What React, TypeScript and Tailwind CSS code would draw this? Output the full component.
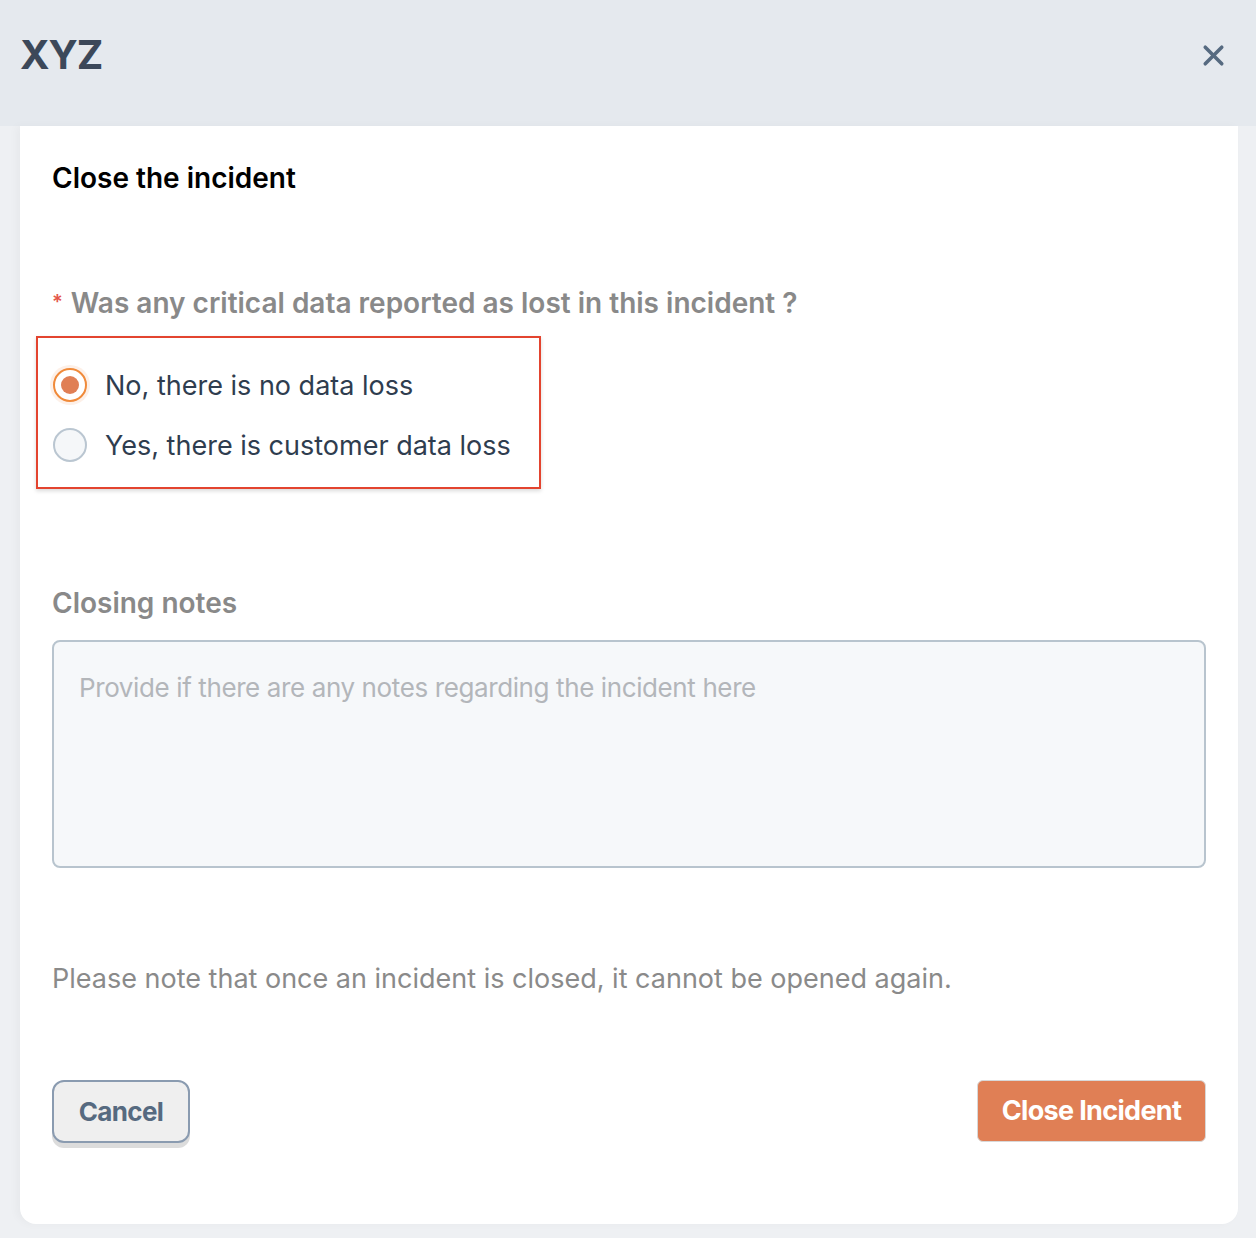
import { X } from "lucide-react";

export default function App() {
  return (
    <div
      className="min-h-[1238px] bg-[#eef0f3]"
      style={{ fontFamily: "Inter, 'Noto Sans', sans-serif" }}
    >
      <header className="flex h-[126px] items-center justify-between bg-[#e5e9ee] pb-[16px] pl-[20px] pr-[26px]">
        <h1 className="text-[40px] font-bold leading-none tracking-tight text-[#3c4859]">
          XYZ
        </h1>
        <X className="h-[33px] w-[33px] text-[#566a80]" strokeWidth={2.6} />
      </header>

      <div className="px-[20px] pb-[14px] pr-[18px]">
        <section className="rounded-b-[16px] bg-white px-[32px] pb-[81px] pt-[36px] shadow-[-4px_0_8px_rgba(0,0,0,0.03)]">
          <h2 className="text-[28px] font-semibold leading-[32px] text-black">
            Close the incident
          </h2>

          <p className="mt-[92px] text-[28px] font-semibold leading-[32px] text-[#898989]">
            <span className="mr-[8px] align-[4px] text-[20px] text-[#e4574a]">*</span>
            Was any critical data reported as lost in this incident ?
          </p>

          <div className="-ml-[16px] mt-[17px] w-[505px] border-2 border-[#e3442f] px-[12px] pb-[18px] pt-[23px] shadow-[0_2px_4px_rgba(0,0,0,0.15)]">
            <label className="flex h-[48px] items-center gap-[15px]">
              <span className="flex h-[40px] w-[40px] items-center justify-center rounded-full bg-[#fdf0e8]">
                <span className="flex h-[34px] w-[34px] items-center justify-center rounded-full border-2 border-[#f08a3a] bg-white">
                  <span className="h-[18px] w-[18px] rounded-full bg-[#e07f55]" />
                </span>
              </span>
              <span className="text-[27px] leading-none text-[#2f3d4f]">
                No, there is no data loss
              </span>
            </label>
            <label className="mt-[12px] flex h-[48px] items-center gap-[15px]">
              <span className="flex h-[40px] w-[40px] items-center justify-center">
                <span className="h-[34px] w-[34px] rounded-full border-2 border-[#bac6d1] bg-[#f5f7f9]" />
              </span>
              <span className="text-[27px] leading-none text-[#2f3d4f]">
                Yes, there is customer data loss
              </span>
            </label>
          </div>

          <p className="mt-[98px] text-[28px] font-semibold leading-[32px] text-[#898989]">
            Closing notes
          </p>

          <textarea
            placeholder="Provide if there are any notes regarding the incident here"
            className="mt-[21px] block h-[228px] w-full resize-none rounded-[8px] border-2 border-[#b8c4ce] bg-[#f6f8fa] px-[25px] py-[30px] text-[26px] leading-[32px] tracking-[-0.015em] text-[#2f3d4f] outline-none placeholder:text-[#b3b6ba]"
          />

          <p className="mt-[95px] text-[27px] leading-[32px] text-[#8a8a8a]">
            Please note that once an incident is closed, it cannot be opened again.
          </p>

          <div className="mt-[85px] flex items-start justify-between">
            <button className="h-[63px] w-[138px] rounded-[12px] border-2 border-[#8a9bb0] bg-[#efefef] text-[26px] font-bold tracking-tight text-[#566a80] shadow-[0_5px_0_#dcdcdc]">
              Cancel
            </button>
            <button className="h-[62px] w-[229px] rounded-[6px] border border-[#d8d8d8] bg-[#e07f55] text-[27px] font-bold tracking-tight text-white">
              Close Incident
            </button>
          </div>
        </section>
      </div>
    </div>
  );
}
